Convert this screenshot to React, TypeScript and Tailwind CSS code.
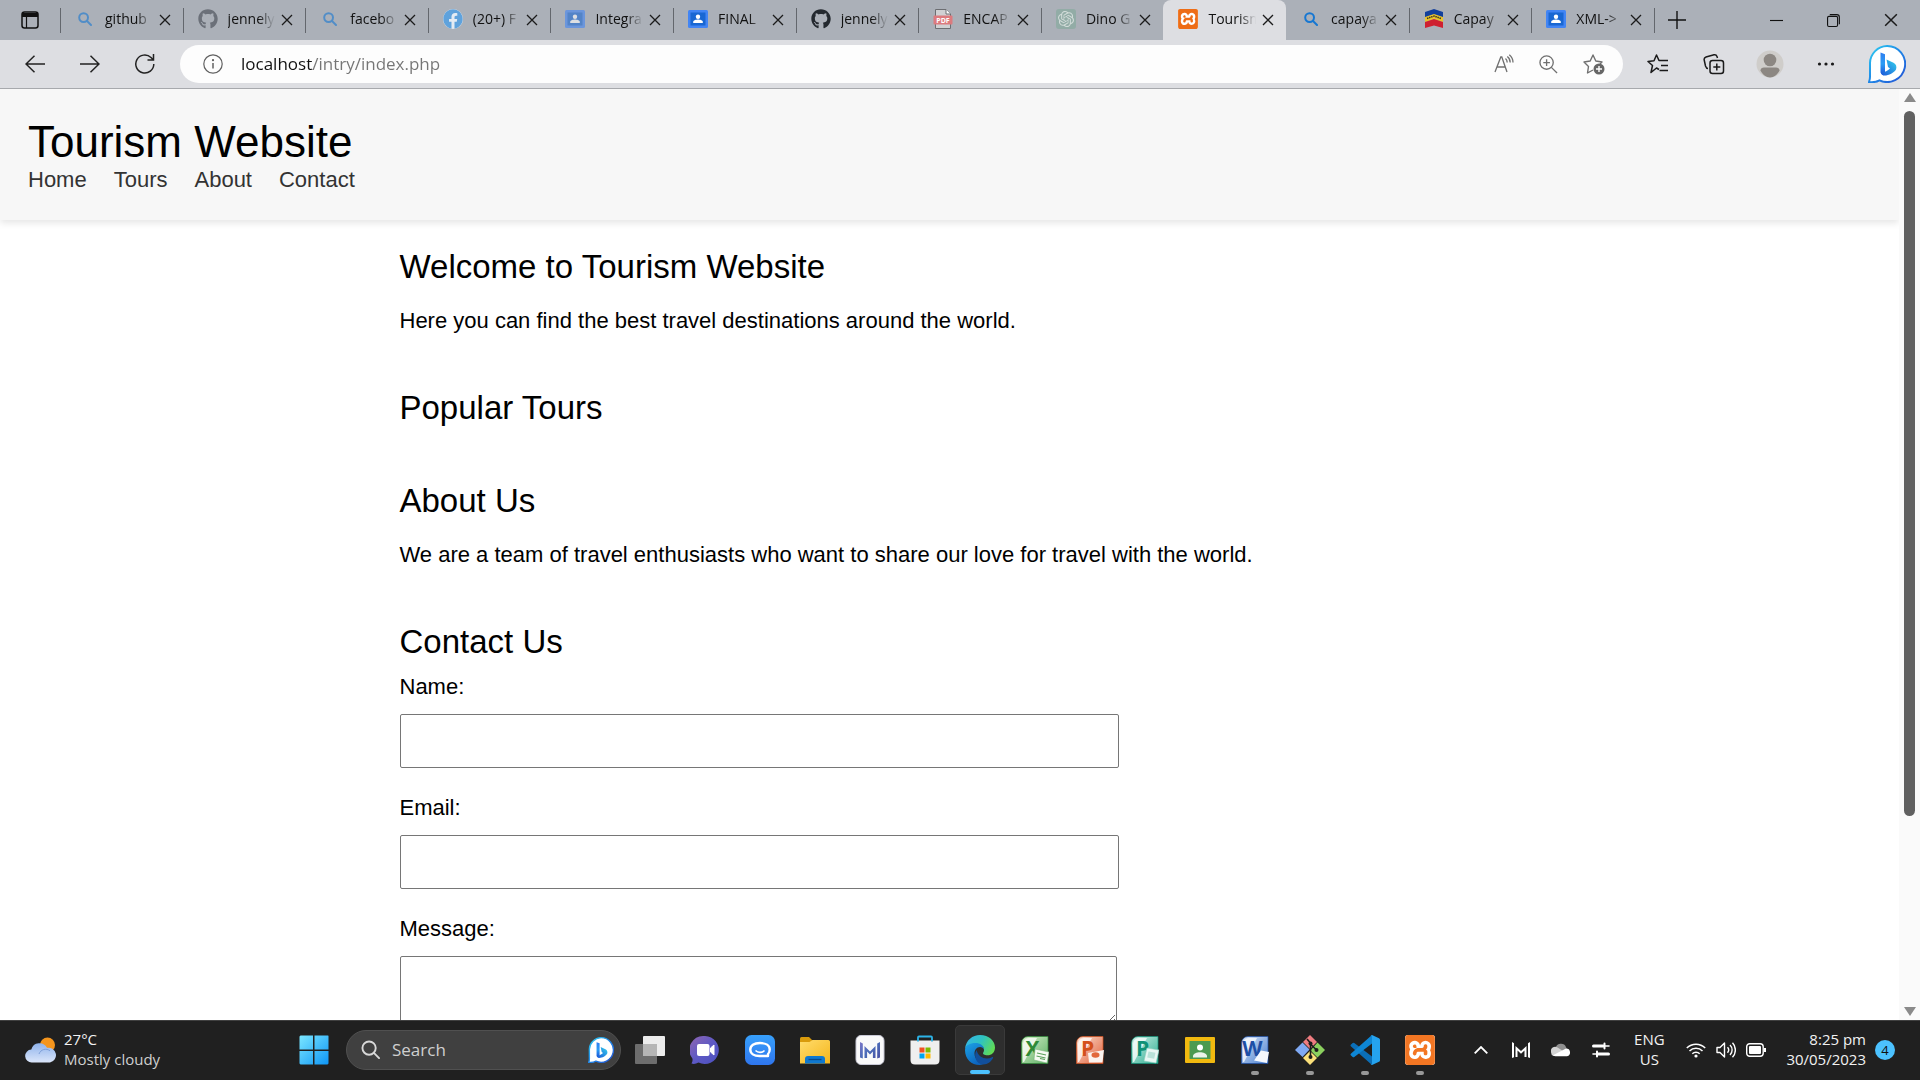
import React from "react";
import type { ReactNode } from "react";
import { FaGithub, FaFacebook } from "react-icons/fa";
import { SiOpenai, SiXampp } from "react-icons/si";

/* ---------- shared marks ---------- */

function SearchMark({ faded = false }: { faded?: boolean }) {
  return (
    <svg viewBox="0 0 14 14" className={faded ? "size-[14px] opacity-60" : "size-[14px]"} fill="none" stroke="#1677d2" strokeWidth="2" strokeLinecap="round">
      <circle cx="5.6" cy="5.6" r="4.4" />
      <path d="M9 9l4 4" />
    </svg>
  );
}

function ClassroomMark({ faded = false }: { faded?: boolean }) {
  return (
    <svg viewBox="0 0 20 20" className={faded ? "size-5 opacity-60" : "size-5"}>
      <rect x="0" y="1" width="20" height="18" rx="1.5" fill="#4285f4" />
      <rect x="2.5" y="3.5" width="15" height="13" fill="#1967d2" />
      <circle cx="10" cy="7.8" r="2.2" fill="#fff" />
      <path d="M5.2 14v-1c0-1.700 3-2.400 4.800-2.400s4.800.7 4.800 2.400v1z" fill="#fff" />
    </svg>
  );
}

function XamppMark({ large = false }: { large?: boolean }) {
  return (
    <span className={large ? "relative flex size-[30px] items-center justify-center rounded-[3px] bg-white" : "relative flex size-5 items-center justify-center rounded-[3px] bg-white"}>
      <SiXampp className={large ? "size-[30px] text-[#f37623]" : "size-5 text-[#ee6d16]"} />
    </span>
  );
}

function PdfMark() {
  return (
    <svg viewBox="0 0 20 20" className="size-5">
      <path d="M2.500.5h10.500l4.500 4.500v14.500h-15z" fill="#d0d1d3" stroke="#6c6e72" />
      <path d="M13 .5v4.500h4.500" fill="#fff" stroke="#6c6e72" />
      <rect x="0.500" y="6.500" width="19" height="9" rx="1" fill="#dc7a7e" />
      <text x="10" y="13.600" fontSize="7" fontWeight="700" textAnchor="middle" fill="#fff" fontFamily="Open Sans, sans-serif">PDF</text>
    </svg>
  );
}

function SealMark() {
  return (
    <svg viewBox="0 0 20 20" className="size-5">
      <path d="M1 3l9-3 9 3v6l-9-3-9 3z" fill="#123f9c" />
      <path d="M1 8l9-3 9 3v5l-9-3-9 3z" fill="#e9c32c" />
      <path d="M3 9.500l7-2.400 7 2.400" fill="none" stroke="#3b3520" strokeWidth="1.500" strokeDasharray="1.500 .7" />
      <path d="M1 13l9-3 9 3v6l-9-2.500-9 2.500z" fill="#cf2030" />
    </svg>
  );
}

function OpenAiMark() {
  return (
    <span className="flex size-5 items-center justify-center rounded-[3px] bg-[#92aca6]">
      <SiOpenai className="size-4 text-[#d2dcd9]" />
    </span>
  );
}

function BingMark({ id, className }: { id: string; className: string }) {
  return (
    <svg viewBox="0 0 38 38" className={className}>
      <defs>
        <linearGradient id={id + "o"} x1="0" y1="0" x2="1" y2="1">
          <stop offset="0" stopColor="#2fd0f2" />
          <stop offset="0.500" stopColor="#1f86e6" />
          <stop offset="1" stopColor="#2452d4" />
        </linearGradient>
        <linearGradient id={id + "s"} x1="0" y1="0" x2="0" y2="1">
          <stop offset="0" stopColor="#2f7df0" />
          <stop offset="0.500" stopColor="#2b9df5" />
          <stop offset="1" stopColor="#1a4fd6" />
        </linearGradient>
        <linearGradient id={id + "b"} x1="0" y1="1" x2="1" y2="0">
          <stop offset="0" stopColor="#1b55d8" />
          <stop offset="1" stopColor="#35d3ee" />
        </linearGradient>
      </defs>
      <path d="M19 1a18 18 0 1 1-7.500 34.300C8.500 37 4.500 37.400 1 37c1-2.500 1.200-4 1-7V18A17.500 17.500 0 0 1 19 1z" fill="#fff" stroke={`url(#${id}o)`} strokeWidth="2" />
      <path d="M12.500 7.500l4.500 1.800v19l-1.500 2c-1.800-.6-3-2-3-4z" fill={`url(#${id}s)`} />
      <path d="M18.500 14.500l7 3.300c2.600 1.300 3.500 4 2.500 6.700-2 3.500-8 6.500-12.500 6-1.500-.5-2.500-1.500-2.800-3.500 3 .8 6.500-1 9.300-3.600l-2-1.400z" fill={`url(#${id}b)`} />
    </svg>
  );
}

/* ---------- browser tabs ---------- */

type Tab = { title: string; icon: ReactNode; active?: boolean; rule?: boolean };

const TABS: Tab[] = [
  { title: "github", icon: <SearchMark faded />, rule: true },
  { title: "jennely", icon: <FaGithub className="size-5 text-[#6b7079]" />, rule: true },
  { title: "facebo", icon: <SearchMark faded />, rule: true },
  { title: "(20+) F", icon: <span className="flex rounded-full bg-[#e4ebf3]"><FaFacebook className="size-5 text-[#5fa2dc]" /></span>, rule: true },
  { title: "Integra", icon: <ClassroomMark faded />, rule: true },
  { title: "FINAL", icon: <ClassroomMark />, rule: true },
  { title: "jennely", icon: <FaGithub className="size-5 text-[#24292f]" />, rule: true },
  { title: "ENCAP", icon: <PdfMark />, rule: true },
  { title: "Dino G", icon: <OpenAiMark />, rule: true },
  { title: "Tourism", icon: <XamppMark />, active: true },
  { title: "capaya", icon: <SearchMark /> },
  { title: "Capay", icon: <SealMark />, rule: true },
  { title: "XML->", icon: <ClassroomMark />, rule: true },
];

function CloseX({ className = "size-3" }: { className?: string }) {
  return (
    <svg viewBox="0 0 12 12" className={className} fill="none" stroke="#1b1b1b" strokeWidth="1.300">
      <path d="M1 1l10 10M11 1L1 11" />
    </svg>
  );
}

function TabItem({ tab }: { tab: Tab }) {
  return (
    <div className={tab.active ? "flex h-10 min-w-0 flex-1 items-center rounded-t-lg bg-[#dddee2]" : "flex h-10 min-w-0 flex-1 items-center"}>
      <span className={tab.rule ? "h-[25px] w-px shrink-0 bg-[#63676d]" : "w-px shrink-0"} />
      <button type="button" role="tab" aria-selected={!!tab.active} className="ml-[14px] flex min-w-0 flex-1 items-center gap-[10px] pb-0.5 text-left">
        <span className="flex size-5 shrink-0 items-center justify-center">{tab.icon}</span>
        <span className="min-w-0 flex-1 overflow-hidden whitespace-nowrap text-[14px] leading-5 text-[#111] [mask-image:linear-gradient(90deg,#000_65%,transparent_100%)]">{tab.title}</span>
      </button>
      <button type="button" aria-label={"Close " + tab.title} className="mr-[6px] flex size-6 shrink-0 items-center justify-center">
        <CloseX className="size-[12px]" />
      </button>
    </div>
  );
}

function TabStrip() {
  return (
    <div className="flex h-10 items-center bg-[#abb0b8]">
      <button type="button" aria-label="Tab actions" className="flex h-10 w-[60px] shrink-0 items-center justify-center">
        <svg viewBox="0 0 18 18" className="size-[18px]" fill="none" stroke="#111" strokeWidth="1.500">
          <rect x="1" y="1" width="16" height="16" rx="2.500" />
          <path d="M1 4h16" strokeWidth="4" />
          <path d="M5.500 5v12" strokeWidth="1.200" />
        </svg>
      </button>
      <div role="tablist" className="flex min-w-0 max-w-[1594px] flex-1">
        {TABS.map((tab, i) => (
          <TabItem key={i} tab={tab} />
        ))}
      </div>
      <span className="h-[25px] w-px bg-[#63676d]" />
      <button type="button" aria-label="New tab" className="ml-1 flex size-9 items-center justify-center">
        <svg viewBox="0 0 18 18" className="size-[18px]" stroke="#111" strokeWidth="1.400"><path d="M9 0v18M0 9h18" /></svg>
      </button>
      <div className="ml-auto flex pr-px">
        <button type="button" aria-label="Minimize" className="flex h-10 w-[57px] items-center justify-center">
          <svg viewBox="0 0 14 14" className="size-[13px]" stroke="#111" strokeWidth="1.200"><path d="M0 7h14" /></svg>
        </button>
        <button type="button" aria-label="Restore" className="flex h-10 w-[57px] items-center justify-center">
          <svg viewBox="0 0 14 14" className="size-[13px]" fill="none" stroke="#111" strokeWidth="1.200">
            <rect x=".6" y="2.600" width="10.800" height="10.800" rx="1.500" />
            <path d="M3 .7h7.500a2.800 2.800 0 0 1 2.800 2.800V11" />
          </svg>
        </button>
        <button type="button" aria-label="Close window" className="flex h-10 w-[57px] items-center justify-center">
          <CloseX className="size-[14px]" />
        </button>
      </div>
    </div>
  );
}

/* ---------- toolbar ---------- */

function ToolButton({ label, className, children }: { label: string; className: string; children: ReactNode }) {
  return (
    <button type="button" aria-label={label} className={"flex h-10 shrink-0 items-center justify-center " + className}>
      {children}
    </button>
  );
}

function Toolbar() {
  return (
    <div className="flex h-[49px] items-center border-b border-[#a7a9ad] bg-[#dddee2] pl-[7px]">
      <ToolButton label="Back" className="w-[55px]">
        <svg viewBox="0 0 20 18" className="h-[18px] w-5" fill="none" stroke="#222" strokeWidth="1.500"><path d="M20 9H1M9.500.8L1 9l8.500 8.200" /></svg>
      </ToolButton>
      <ToolButton label="Forward" className="w-[55px]">
        <svg viewBox="0 0 20 18" className="h-[18px] w-5" fill="none" stroke="#222" strokeWidth="1.500"><path d="M0 9h19M10.500.8L19 9l-8.500 8.200" /></svg>
      </ToolButton>
      <ToolButton label="Refresh" className="w-[55px]">
        <svg viewBox="0 0 20 20" className="size-5" fill="none" stroke="#222" strokeWidth="1.500"><path d="M18.800 10A9 9 0 1 1 16 3.500L18.300 5.800M18.500 0v6h-6" /></svg>
      </ToolButton>
      <div className="mr-[7px] ml-2 flex h-[38px] min-w-0 flex-1 items-center rounded-full bg-[#fdfdfd] pr-[7px]">
        <button type="button" aria-label="Site information" className="ml-[23px] shrink-0">
          <svg viewBox="0 0 20 20" className="size-5" fill="none" stroke="#606060" strokeWidth="1.200">
            <circle cx="10" cy="10" r="9.200" />
            <path d="M10 9v5.500" strokeWidth="1.500" />
            <circle cx="10" cy="6.200" r=".5" fill="#606060" />
          </svg>
        </button>
        <input
          aria-label="Address"
          defaultValue="localhost/intry/index.php"
          className="ml-[18px] min-w-0 flex-1 bg-[linear-gradient(90deg,#111_72px,#757575_72px)] bg-clip-text text-[17px] leading-6 text-transparent outline-none"
        />
        <ToolButton label="Read aloud" className="w-[45px]">
          <svg viewBox="0 0 20 20" className="size-5" fill="none" stroke="#707070" strokeWidth="1.300">
            <path d="M1 18L6.800 3h1L13 18M3 13h8M11.500 4.500c1.200 1 1.700 2.500 1.700 4M13.300 2.500c2 1.500 2.900 3.500 2.900 6M15.300.8c2.500 2 3.700 4.500 3.700 7.700" />
          </svg>
        </ToolButton>
        <ToolButton label="Zoom" className="w-[45px]">
          <svg viewBox="0 0 20 20" className="size-[19px]" fill="none" stroke="#707070" strokeWidth="1.400">
            <circle cx="8" cy="8" r="7" /><path d="M13 13l6 6M8 4.500v7M4.500 8h7" />
          </svg>
        </ToolButton>
        <ToolButton label="Add to favorites" className="w-[45px]">
          <svg viewBox="0 0 22 22" className="size-[22px]" fill="none" stroke="#707070" strokeWidth="1.400" strokeLinejoin="round">
            <path d="M10 17l-5.500 3 1-6.500L1 9l6.200-1L10 2l2.800 6 6.200 1-2 2" />
            <circle cx="16" cy="16" r="5.500" fill="#666" stroke="none" />
            <path d="M16 13v6M13 16h6" stroke="#fff" />
          </svg>
        </ToolButton>
      </div>
      <ToolButton label="Favorites" className="w-14">
        <svg viewBox="0 0 22 20" className="h-5 w-[22px]" fill="none" stroke="#1a1a1a" strokeWidth="1.500" strokeLinejoin="round">
          <path d="M12 15.500L9.500 14l-5.500 4.500 1.500-7L1 7.500l6-.8L9.500 1l2.500 5.500h9M14 11.500h7M12.500 16.500H21" />
        </svg>
      </ToolButton>
      <ToolButton label="Collections" className="w-14">
        <svg viewBox="0 0 22 22" className="size-[22px]" fill="none" stroke="#1a1a1a" strokeWidth="1.500">
          <rect x="7" y="7.500" width="13.500" height="13" rx="2.500" />
          <path d="M13.800 10.500v7M10.300 14h7M5 15.500C3.500 15.500 3 14.500 2.500 13L1.200 7c-.3-1.500.3-2.500 1.800-3l8-2.200c1.500-.3 2.500.3 3 1.700l.5 1.500" />
        </svg>
      </ToolButton>
      <ToolButton label="Profile" className="w-14">
        <svg viewBox="0 0 28 28" className="size-7">
          <circle cx="14" cy="14" r="13.500" fill="#cfcdca" />
          <circle cx="14" cy="10" r="6.300" fill="#8c8782" />
          <path d="M4.500 20.500c0-2 1.500-3 3.500-3h12c2 0 3.500 1 3.500 3-2 4-5.500 7-9.500 7s-7.500-3-9.500-7z" fill="#8c8782" />
        </svg>
      </ToolButton>
      <ToolButton label="Settings and more" className="w-14">
        <svg viewBox="0 0 18 4" className="h-1 w-[18px]" fill="#1a1a1a"><circle cx="2.500" cy="2" r="1.600" /><circle cx="9" cy="2" r="1.600" /><circle cx="15.500" cy="2" r="1.600" /></svg>
      </ToolButton>
      <ToolButton label="Bing" className="w-[66px]">
        <BingMark id="tb" className="size-[38px]" />
      </ToolButton>
    </div>
  );
}

/* ---------- web page ---------- */

const LINKS = ["Home", "Tours", "About", "Contact"];

function Heading({ children }: { children: ReactNode }) {
  return <h2 className="text-[33px] leading-[37px]">{children}</h2>;
}

function TourismPage() {
  const field = "mt-[15px] block rounded-[2px] border border-[#767676] bg-white px-3";
  return (
    <div className="min-w-0 flex-1 overflow-hidden bg-white font-['Liberation_Sans',Arial,sans-serif] text-[22px] leading-[25px] text-black">
      <header className="bg-[#f7f7f7] px-7 pt-[27px] pb-7 shadow-[0_3px_7px_rgba(0,0,0,0.1)]">
        <h1 className="text-[44px] leading-[51px]">Tourism Website</h1>
        <nav className="flex gap-[27px]">
          {LINKS.map((l) => (
            <a key={l} href={"#" + l.toLowerCase()} className="text-[#333]">{l}</a>
          ))}
        </nav>
      </header>
      <main className="mx-auto flex max-w-[1100px] flex-col gap-14 pt-7">
        <section>
          <Heading>Welcome to Tourism Website</Heading>
          <p className="mt-[23px]">Here you can find the best travel destinations around the world.</p>
        </section>
        <section id="tours">
          <Heading>Popular Tours</Heading>
        </section>
        <section id="about">
          <Heading>About Us</Heading>
          <p className="mt-[23px]">We are a team of travel enthusiasts who want to share our love for travel with the world.</p>
        </section>
        <section id="contact">
          <Heading>Contact Us</Heading>
          <form className="mt-[14px] flex flex-col gap-[27px]">
            <div>
              <label htmlFor="name" className="block">Name:</label>
              <input id="name" type="text" className={field + " h-[54px] w-full max-w-[719px]"} />
            </div>
            <div>
              <label htmlFor="email" className="block">Email:</label>
              <input id="email" type="email" className={field + " h-[54px] w-full max-w-[719px]"} />
            </div>
            <div>
              <label htmlFor="message" className="block">Message:</label>
              <textarea id="message" className={field + " h-[68px] w-full max-w-[717px]"} />
            </div>
          </form>
        </section>
      </main>
    </div>
  );
}

function ScrollRail() {
  return (
    <div aria-hidden="true" className="flex w-[21px] shrink-0 flex-col items-center justify-between bg-[#fafafa] py-1">
      <svg viewBox="0 0 12 9" className="h-[9px] w-3" fill="#8a8a8a"><path d="M6 0l6 9H0z" /></svg>
      <div className="my-[6px] w-full flex-1">
        <div className="mx-auto mt-[3px] h-[79%] w-[11px] rounded-full bg-[#606060]" />
      </div>
      <svg viewBox="0 0 12 9" className="h-[9px] w-3" fill="#8a8a8a"><path d="M6 9l6-9H0z" /></svg>
    </div>
  );
}

/* ---------- taskbar icons ---------- */

function OfficeMark({ letter, from, to, dark, children }: { letter: string; from: string; to: string; dark: string; children: ReactNode }) {
  const id = "office" + dark.slice(1);
  return (
    <svg viewBox="0 0 28 28" className="size-7">
      <defs>
        <linearGradient id={id} x1="0" y1="0" x2="1" y2="1">
          <stop offset="0" stopColor={from} />
          <stop offset="1" stopColor={to} />
        </linearGradient>
      </defs>
      <path d="M7 .5h20v27H.500V7Q1 1 7 .5z" fill={`url(#${id})`} stroke={dark} strokeOpacity=".7" />
      <path d="M2 26V8q.5-5.500 6-6h8L3 26z" fill="#fff" fillOpacity=".75" />
      <text x="11.500" y="19.500" fontSize="21" fontWeight="700" textAnchor="middle" fill={dark} fontFamily="Open Sans, sans-serif">{letter}</text>
      {children}
    </svg>
  );
}

const TaskView = (
  <svg viewBox="0 0 30 28" className="h-7 w-[30px]">
    <rect x="8" y="0" width="22" height="20" rx="1" fill="#ececec" />
    <rect x="0" y="8" width="22" height="20" rx="1" fill="#7b7b7b" fillOpacity=".85" />
    <rect x="8" y="8" width="14" height="12" fill="#b5b5b5" />
  </svg>
);

const Chat = (
  <svg viewBox="0 0 30 30" className="size-[30px]">
    <defs><linearGradient id="chat" x1="0" y1="0" x2="1" y2="1"><stop offset="0" stopColor="#9165b0" /><stop offset=".5" stopColor="#5e59c4" /><stop offset="1" stopColor="#4b50c0" /></linearGradient></defs>
    <path d="M15 1a14 14 0 1 1-6.500 26.500C6 29 3.500 29.200 1.500 28.500c1-1.500 1.300-3 .9-5A14 14 0 0 1 15 1z" fill="url(#chat)" />
    <rect x="7" y="9" width="12.500" height="12" rx="2" fill="#fff" />
    <path d="M20.500 13l3.500-3v10l-3.500-3z" fill="#fff" stroke="#fff" strokeLinejoin="round" />
  </svg>
);

const ChatBubble = (
  <svg viewBox="0 0 30 30" className="size-[30px]" fill="none">
    <defs><linearGradient id="bub" x1="0" y1="0" x2="0" y2="1"><stop offset="0" stopColor="#37a0fb" /><stop offset="1" stopColor="#2f76ee" /></linearGradient></defs>
    <rect width="30" height="30" rx="6.500" fill="url(#bub)" />
    <path d="M23 21H14.500C9 21 5.300 18.500 5.300 14.500S9 8 15 8s9.700 2.500 9.700 6.500c0 2-.7 3.500-1.700 4.500z" stroke="#fff" strokeWidth="2.400" strokeLinejoin="round" />
    <path d="M10.500 15.500c2.500 2.500 6.500 2.500 9 0" stroke="#fff" strokeWidth="1.600" />
  </svg>
);

const Folder = (
  <svg viewBox="0 0 30 28" className="h-7 w-[30px]">
    <defs><linearGradient id="fold" x1="0" y1="0" x2="1" y2="1"><stop offset="0" stopColor="#ffdc6c" /><stop offset="1" stopColor="#f5b61c" /></linearGradient></defs>
    <path d="M0 2.500Q0 1 1.500 1H9l4 4v4H0z" fill="#d99b0c" />
    <path d="M0 6h9.500l3-2H28.500Q30 4 30 5.500V27.500H0z" fill="url(#fold)" />
    <path d="M5 27.500V23q0-3 3-3h14q3 0 3 3v4.500z" fill="#0f78cf" />
    <path d="M8.500 23.500h13" stroke="#0a4a8c" strokeWidth="1.300" />
  </svg>
);

const MWave = (
  <svg viewBox="0 0 30 30" className="size-[30px]">
    <defs><linearGradient id="mw" x1="0" y1="0" x2="30" y2="30" gradientUnits="userSpaceOnUse"><stop offset="0.100" stopColor="#8a78cc" /><stop offset=".5" stopColor="#4a6cb8" /><stop offset="1" stopColor="#4a3f96" /></linearGradient></defs>
    <rect x="1" y=".5" width="28" height="29" rx="5" fill="#fafafa" stroke="#c9c9d6" />
    <path d="M5 7l2.800 1.500v15L5 22.500zM25 7l-2.800 1.500v15l2.800-1zM9.500 11l5.500 5.500 5.500-5.500v12h-2.600v-6.500l-2.900 3-2.900-3V23H9.500z" fill="url(#mw)" />
  </svg>
);

const Store = (
  <svg viewBox="0 0 30 30" className="size-[30px]">
    <path d="M.5 5.500h29V25q0 4.500-4.500 4.500H5Q.5 29.500.5 25z" fill="#efefef" />
    <path d="M8 6.500V2.500Q8 1.500 9 1.500h12q1 0 1 1V6.500" fill="none" stroke="#2cb4e8" strokeWidth="1.800" />
    <path d="M9.500 12.500h5v5h-5z" fill="#f25022" /><path d="M15.500 12.500h5v5h-5z" fill="#7fba00" />
    <path d="M9.500 18.500h5v5h-5z" fill="#00a4ef" /><path d="M15.500 18.500h5v5h-5z" fill="#ffb900" />
  </svg>
);

const EdgeLogo = (
  <svg viewBox="0 0 30 30" className="size-[30px]">
    <defs>
      <linearGradient id="e1" x1="0" y1=".2" x2="1" y2=".6"><stop offset="0" stopColor="#35b5e8" /><stop offset=".5" stopColor="#2fc3c0" /><stop offset="1" stopColor="#62dc53" /></linearGradient>
      <linearGradient id="e2" x1="0" y1="0" x2=".6" y2="1"><stop offset="0" stopColor="#1ca3e6" /><stop offset="1" stopColor="#0c62bd" /></linearGradient>
    </defs>
    <path d="M0 14C1 5 7.500 0 15 0c9 0 15 6 15 12.500 0 5-3.500 7.800-7.500 7.800-3.500 0-4.500-1.300-4.500-2 0-.8 1-1.300 1-3.300C19 11.500 15.500 9 11 9 5.500 9 1 11 0 14z" fill="url(#e1)" />
    <path d="M0 15C.3 10 5 8 10.500 8 15 8 19 10.500 19 14.500c-.5-1.500-2-2.500-4-2.500-3.500 0-5.500 3-5.500 6.500 0 5.500 4.500 9.500 10 9.500-1.500 1.300-3 2-5 2C6.500 30 0 24 0 15z" fill="url(#e2)" />
    <path d="M11.500 15c-3.500 6 0 14.500 6.500 14.500 5 0 8.500-3.500 10-6.500.3-.8-.2-1.200-1-.8-5.500 2.800-13.500 1-15.500-7.200z" fill="#124f9b" />
  </svg>
);

const Classroom = (
  <svg viewBox="0 0 30 26" className="h-[26px] w-[30px]">
    <rect width="30" height="26" rx="1" fill="#f2b90f" />
    <rect x="4.500" y="4" width="21" height="18" fill="#4c9a50" />
    <circle cx="15" cy="10.500" r="3" fill="#fff" />
    <path d="M8 20.500v-1.500c0-2.500 4-3.800 7-3.800s7 1.300 7 3.800v1.500z" fill="#e9f3e9" />
  </svg>
);

const GitLogo = (
  <svg viewBox="0 0 30 30" className="size-[30px]">
    <path d="M15 0l7 7-7 7-7-7z" fill="#ef7c80" /><path d="M7.500 7.500l7 7-7 7.500L0 15z" fill="#7fa9f3" />
    <path d="M22.500 7.500L30 15l-7.500 7.500-7-7z" fill="#8bd05e" /><path d="M15 16l7 7-7 7-7-7z" fill="#fbe07a" />
    <path d="M12 4l3.500 4v14M15.500 9l6 6" stroke="#1d1d1d" strokeWidth="1.600" fill="none" />
    <circle cx="15.500" cy="8.500" r="2" fill="#1d1d1d" /><circle cx="21.500" cy="15" r="2" fill="#1d1d1d" /><circle cx="15.500" cy="22" r="2" fill="#1d1d1d" />
  </svg>
);

const VsCode = (
  <svg viewBox="0 0 30 30" className="size-[30px]">
    <path d="M.8 11.200Q0 10.300 1 9.500l1.700-1.400q.8-.6 1.600 0L22 21.500V30z" fill="#0b6fb8" />
    <path d="M.8 18.800Q0 19.700 1 20.500l1.700 1.400q.8.600 1.600 0L22 8.500V0z" fill="#0e86d4" />
    <path d="M22 0l7 3.200q1 .5 1 1.600v20.400q0 1.100-1 1.600L22 30q-1 .1-1.500-.8 1.500.8 1.500-1V2q0-2-1.500-1.200Q21 0 22 0z" fill="#25a3ef" />
  </svg>
);

type App = { name: string; icon: ReactNode; active?: boolean; open?: boolean };

const APPS: App[] = [
  { name: "Task view", icon: TaskView },
  { name: "Chat", icon: Chat },
  { name: "Messages", icon: ChatBubble },
  { name: "File Explorer", icon: Folder },
  { name: "MWave", icon: MWave },
  { name: "Microsoft Store", icon: Store },
  { name: "Microsoft Edge", icon: EdgeLogo, active: true },
  {
    name: "Excel",
    icon: (
      <OfficeMark letter="X" from="#d9efcb" to="#5db065" dark="#2f8a37">
        <path d="M14 13l14 3-2 11-13-3z" fill="#f5faf3" stroke="#7db77f" strokeWidth=".6" />
        <path d="M16 17l9 2M15.500 20l9 2M19 22.500l5 1" stroke="#5aa05c" strokeWidth="1.200" />
      </OfficeMark>
    ),
  },
  {
    name: "PowerPoint",
    icon: (
      <OfficeMark letter="P" from="#fbe2d3" to="#e2603a" dark="#d4501c">
        <path d="M12 17l16-3-1.500 12.500H13z" fill="#fbf3ef" />
        <ellipse cx="19.500" cy="19" rx="4" ry="2.800" fill="#e2683c" />
      </OfficeMark>
    ),
  },
  {
    name: "Publisher",
    icon: (
      <OfficeMark letter="P" from="#d0f0e6" to="#2fae93" dark="#0f9277">
        <path d="M16 12l12 2-3 13-12-2z" fill="#e9f7f4" stroke="#8fcfc0" strokeWidth=".6" />
        <path d="M17.500 15.500l7 1.200-1.300 6-7-1.200z" fill="#b9e2d9" />
      </OfficeMark>
    ),
  },
  { name: "Classroom", icon: Classroom },
  {
    name: "Word",
    icon: (
      <OfficeMark letter="W" from="#dbe7f8" to="#4a80d0" dark="#1d4fa6">
        <path d="M20 14.500l8 1.500-2 11-13-2.500z" fill="#f5f8fd" />
      </OfficeMark>
    ),
    open: true,
  },
  { name: "Git", icon: GitLogo, open: true },
  { name: "Visual Studio Code", icon: VsCode, open: true },
  { name: "XAMPP", icon: <XamppMark large />, open: true },
];

function TaskApp({ app }: { app: App }) {
  return (
    <div className="flex w-[55px] shrink-0 justify-center">
      <button
        type="button"
        aria-label={app.name}
        className={
          app.active
            ? "relative flex size-[50px] items-center justify-center rounded-[5px] border border-[#3a3a3a] bg-[#2e2e2e]"
            : "relative flex size-[50px] items-center justify-center rounded-[5px]"
        }
      >
        {app.icon}
        {app.active && <span className="absolute bottom-0 h-1 w-5 rounded-full bg-[#4cc2ff]" />}
        {app.open && <span className="absolute bottom-0 h-1 w-2 rounded-full bg-[#989898]" />}
      </button>
    </div>
  );
}

function TrayButton({ label, className, children }: { label: string; className: string; children: ReactNode }) {
  return (
    <button type="button" aria-label={label} className={"flex h-12 shrink-0 items-center justify-center " + className}>
      {children}
    </button>
  );
}

function Taskbar() {
  return (
    <div className="flex h-[60px] shrink-0 items-center border-t border-[#404040] bg-[#202020] pb-0.5 text-[15px] leading-5 text-[#f2f2f2]">
      <button type="button" className="flex w-[286px] shrink-0 items-center gap-[7px] pl-[25px] text-left">
        <svg viewBox="0 0 32 28" className="h-7 w-8">
          <defs><linearGradient id="cl" x1="0" y1="0" x2="0" y2="1"><stop offset="0" stopColor="#8fb3ec" /><stop offset="1" stopColor="#dbe6fa" /></linearGradient></defs>
          <circle cx="22.500" cy="9" r="7.500" fill="#f5951d" />
          <path d="M7 26.500a6.500 6.500 0 0 1-.7-13A8.500 8.500 0 0 1 22 11.800a7.500 7.500 0 0 1 3 14.700z" fill="url(#cl)" />
          <path d="M14 18a7 7 0 0 1 11-3.200" stroke="#7f9fd8" strokeWidth="1" fill="none" />
        </svg>
        <span className="pb-0.5">
          <span className="block">27°C</span>
          <span className="block text-[#cfcfcf]">Mostly cloudy</span>
        </span>
      </button>
      <button type="button" aria-label="Start" className="flex h-12 w-14 shrink-0 items-center justify-center">
        <svg viewBox="0 0 30 30" className="size-[30px]">
          <defs><linearGradient id="win" x1="0" y1="0" x2="30" y2="30" gradientUnits="userSpaceOnUse"><stop offset="0" stopColor="#7de8ff" /><stop offset="1" stopColor="#0c94f5" /></linearGradient></defs>
          <path d="M1.500.5h12.500v14H.5v-13zM15.500.500h13.500q.5 0 .5.500v13.500h-14zM.5 16h13.500v13.500H1.500l-1-1zM15.500 16h14v12.500l-1 1H15.500z" fill="url(#win)" />
        </svg>
      </button>
      <label className="ml-1 flex h-10 w-[275px] shrink-0 items-center rounded-full border border-[#505050] bg-[#404040] pr-[6px] pl-[14px]">
        <svg viewBox="0 0 20 20" className="size-[19px] shrink-0" fill="none" stroke="#d8d8d8" strokeWidth="2" strokeLinecap="round"><circle cx="8.500" cy="8.500" r="7" /><path d="M13.800 13.800L19 19" /></svg>
        <input aria-label="Search" placeholder="Search" className="ml-3 min-w-0 flex-1 bg-transparent text-[17px] leading-6 outline-none placeholder:text-[#cfcfcf]" />
        <BingMark id="sb" className="size-[26px] shrink-0" />
      </label>
      <div className="ml-px flex shrink-0">
        {APPS.map((app) => (
          <TaskApp key={app.name} app={app} />
        ))}
      </div>
      <div className="ml-auto flex shrink-0 items-center pr-[25px]">
        <TrayButton label="Show hidden icons" className="w-10">
          <svg viewBox="0 0 14 8" className="h-2 w-[14px]" fill="none" stroke="#fff" strokeWidth="1.800"><path d="M.7 7.300L7 1l6.300 6.300" /></svg>
        </TrayButton>
        <TrayButton label="MWave status" className="w-10">
          <svg viewBox="0 0 18 16" className="h-4 w-[18px]" fill="#fff"><path d="M0 0l2 1.200v14L0 16zM18 0l-2 1.200v14l2 .8zM3.500 4L9 9l5.500-5v11h-2V8.500L9 11.800 5.500 8.500V15h-2z" /></svg>
        </TrayButton>
        <TrayButton label="OneDrive" className="w-10">
          <svg viewBox="0 0 20 14" className="h-[14px] w-5"><path d="M4.500 5.500A5.500 5.500 0 0 1 15 4l1 3-6 3z" fill="#8f8f8f" /><path d="M0 9.200A4.300 4.300 0 0 1 6.500 4.500L12 8l-9.500 5A4.200 4.200 0 0 1 0 9.200z" fill="#d3d3d3" /><path d="M2 12.200L15 5.500a3.900 3.900 0 0 1 1 7.700H4.500q-1.500 0-2.500-1z" fill="#fff" /></svg>
        </TrayButton>
        <TrayButton label="Audio settings" className="w-10">
          <svg viewBox="0 0 18 16" className="h-4 w-[18px]" fill="none" stroke="#fff" strokeLinecap="round"><path d="M1.500 4h10M6 12h10.500" strokeWidth="3" /><path d="M13 4h4M1 12h4" strokeWidth="1.600" /><path d="M12.500 1.500v5M5 9.500v5" strokeWidth="2" /></svg>
        </TrayButton>
        <button type="button" className="w-14 pb-0.5 text-center">
          <span className="block">ENG</span>
          <span className="block">US</span>
        </button>
        <button type="button" aria-label="Network, volume and battery" className="ml-[9px] flex h-12 items-center gap-[10px]">
          <svg viewBox="0 0 20 16" className="h-4 w-5" fill="none" stroke="#fff" strokeWidth="1.500"><path d="M.8 6a13 13 0 0 1 18.400 0M3.500 9a9.200 9.200 0 0 1 13 0M6.300 11.800a5.300 5.300 0 0 1 7.400 0" /><circle cx="10" cy="14" r="1.600" fill="#fff" stroke="none" /></svg>
          <svg viewBox="0 0 20 18" className="h-[18px] w-5" fill="none" stroke="#fff" strokeWidth="1.400" strokeLinejoin="round"><path d="M1 6.500h3l4.500-4.500v14L4 11.500H1zM11.500 6.300a4 4 0 0 1 0 5.400M14 4a7 7 0 0 1 0 10M16.500 1.800a10.500 10.500 0 0 1 0 14.400" /></svg>
          <svg viewBox="0 0 20 14" className="h-[14px] w-5" fill="none" stroke="#fff" strokeWidth="1.400"><rect x=".7" y=".7" width="16.500" height="12.600" rx="3" /><rect x="3" y="3" width="12" height="8" rx="1" fill="#fff" stroke="none" /><path d="M19 5v4" strokeWidth="2" /></svg>
        </button>
        <button type="button" className="ml-5 pb-0.5 text-right whitespace-nowrap">
          <span className="block">8:25 pm</span>
          <span className="block">30/05/2023</span>
        </button>
        <button type="button" className="ml-[9px] flex size-5 items-center justify-center rounded-full bg-[#4cc2ff] text-[13px] leading-5 text-[#111]">4</button>
      </div>
    </div>
  );
}

export default function App() {
  return (
    <div className="flex h-screen flex-col overflow-hidden font-['Open_Sans','Noto_Sans',sans-serif]">
      <TabStrip />
      <Toolbar />
      <div className="flex min-h-0 flex-1">
        <TourismPage />
        <ScrollRail />
      </div>
      <Taskbar />
    </div>
  );
}
